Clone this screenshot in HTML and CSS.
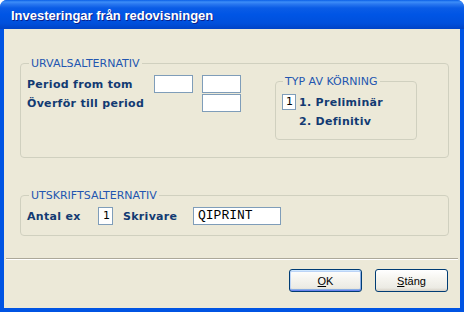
FILE: index.html
```html
<!DOCTYPE html>
<html lang="sv">
<head>
    <meta charset="UTF-8">
    <title>Investeringar från redovisningen</title>
    <link rel="stylesheet" href="styles.css">
</head>
<body>
    <div class="window">
        <!-- Title bar -->
        <div class="titlebar">Investeringar från redovisningen</div>

        <div class="client">
            <!-- Selection options -->
            <fieldset class="group group-top">
                <legend>URVALSALTERNATIV</legend>
                <div class="group-row">
                    <div class="period-grid">
                        <label class="label">Period from tom</label>
                        <div class="field field-period"></div>
                        <div class="field field-period"></div>
                        <label class="label">Överför till period</label>
                        <div class="spacer"></div>
                        <div class="field field-period"></div>
                    </div>

                    <fieldset class="group group-run">
                        <legend>TYP AV KÖRNING</legend>
                        <div class="run-row">
                            <div class="field field-small">1</div>
                            <span class="label">1. Preliminär</span>
                        </div>
                        <div class="run-row run-indent">
                            <span class="label">2. Definitiv</span>
                        </div>
                    </fieldset>
                </div>
            </fieldset>

            <!-- Print options -->
            <fieldset class="group group-print">
                <legend>UTSKRIFTSALTERNATIV</legend>
                <div class="print-row">
                    <span class="label label-copies">Antal ex</span>
                    <div class="field field-copies">1</div>
                    <span class="label label-printer">Skrivare</span>
                    <div class="field field-printer">QIPRINT</div>
                </div>
            </fieldset>

            <div class="separator"></div>

            <div class="buttons">
                <button class="btn btn-default"><u>O</u>K</button>
                <button class="btn"><u>S</u>täng</button>
            </div>
        </div>
    </div>
</body>
</html>
```

FILE: styles.css
```css
body {
    margin: 0;
    padding: 0;
    background-color: #fff;
    width: 464px;
    height: 312px;
    overflow: hidden;
}

.window {
    width: 464px;
    height: 312px;
    display: flex;
    flex-direction: column;
    background-color: #0054e3;
    border-radius: 7px 7px 0 0;
    box-sizing: border-box;
    overflow: hidden;
}

/* Title bar */
.titlebar {
    height: 29px;
    flex: none;
    display: flex;
    align-items: center;
    padding-left: 11px;
    padding-top: 1px;
    box-sizing: border-box;
    background: linear-gradient(to bottom, #0a5fe6 0, #3d8ef8 2px, #2a78f0 4px, #0a5ce6 8px, #0055e5 50%, #0050dc 80%, #0043c6 100%);
    color: #fff;
    font-family: "Liberation Sans", Arial, sans-serif;
    font-weight: bold;
    font-size: 13px;
    text-shadow: 1px 1px #0b1f8a;
}

.client {
    flex: 1;
    margin: 0 4px 4px 4px;
    background-color: #ece9d8;
    display: flex;
    flex-direction: column;
}

/* Group boxes */
.group {
    border: 1px solid #d0d0bf;
    border-radius: 4px;
    margin: 0;
    padding: 5px 0 10px 6px;
    min-width: 0;
}

.group legend {
    font-family: "DejaVu Sans", Verdana, sans-serif;
    font-size: 11px;
    line-height: 13px;
    color: #2356b0;
    margin-left: 2px;
    padding: 0 2px;
}

.group-top {
    margin: 28px 11px 0 16px;
    padding-bottom: 17px;
}

.group-row {
    display: flex;
    align-items: flex-start;
}

.period-grid {
    display: grid;
    grid-template-columns: 118px 39px 39px;
    grid-auto-rows: 18px;
    column-gap: 9px;
    row-gap: 1px;
    align-items: center;
}

.label {
    font-family: "DejaVu Sans", Verdana, sans-serif;
    font-weight: bold;
    font-size: 11px;
    color: #123a72;
    letter-spacing: 0.3px;
    white-space: nowrap;
}

.field {
    height: 18px;
    box-sizing: border-box;
    background-color: #fff;
    border: 1px solid #7f9db9;
    font-family: "DejaVu Sans", Verdana, sans-serif;
    font-size: 12px;
    line-height: 16px;
    color: #000;
}

.group-run {
    width: 142px;
    box-sizing: border-box;
    margin: 0 31px 0 auto;
    padding: 6px 0 10px 6px;
}

.group-run legend {
    margin-left: 1px;
}

.run-row {
    height: 16px;
    display: flex;
    align-items: center;
    gap: 3px;
}

.run-row + .run-row {
    margin-top: 3px;
}

.run-indent {
    padding-left: 17px;
}

.field-small {
    width: 14px;
    height: 16px;
    font-size: 11px;
    line-height: 14px;
    padding-left: 3px;
}

/* Print options */
.group-print {
    margin: 31px 11px 0 16px;
}

.print-row {
    display: flex;
    align-items: center;
    height: 18px;
}

.label-copies {
    width: 71px;
}

.field-copies {
    width: 15px;
    font-size: 11px;
    padding-left: 4px;
}

.label-printer {
    width: 70px;
    margin-left: 10px;
}

.field-printer {
    width: 88px;
    font-family: "Liberation Mono", "Courier New", monospace;
    font-size: 13px;
    padding-left: 4px;
}

.separator {
    margin: 22px 2px 0 2px;
    border-top: 1px solid #aca899;
    border-bottom: 1px solid #fff;
}

/* Buttons */
.buttons {
    display: flex;
    justify-content: flex-end;
    gap: 13px;
    margin: 9px 12px 0 0;
}

.btn {
    width: 73px;
    height: 23px;
    padding: 0;
    border: 1px solid #003c74;
    border-radius: 3px;
    background: linear-gradient(to bottom, #ffffff 0, #f6f5f0 40%, #ecebe4 85%, #d6d0c5 100%);
    font-family: "Liberation Sans", Tahoma, sans-serif;
    font-size: 11px;
    color: #000;
}

.btn-default {
    box-shadow: inset 0 1px #cee7ff, inset 0 -1px #6982ee, inset 1px 0 #bcd4f6, inset -1px 0 #89ade4, inset 0 2px #bcd4f6, inset 0 -2px #89ade4;
}
```
